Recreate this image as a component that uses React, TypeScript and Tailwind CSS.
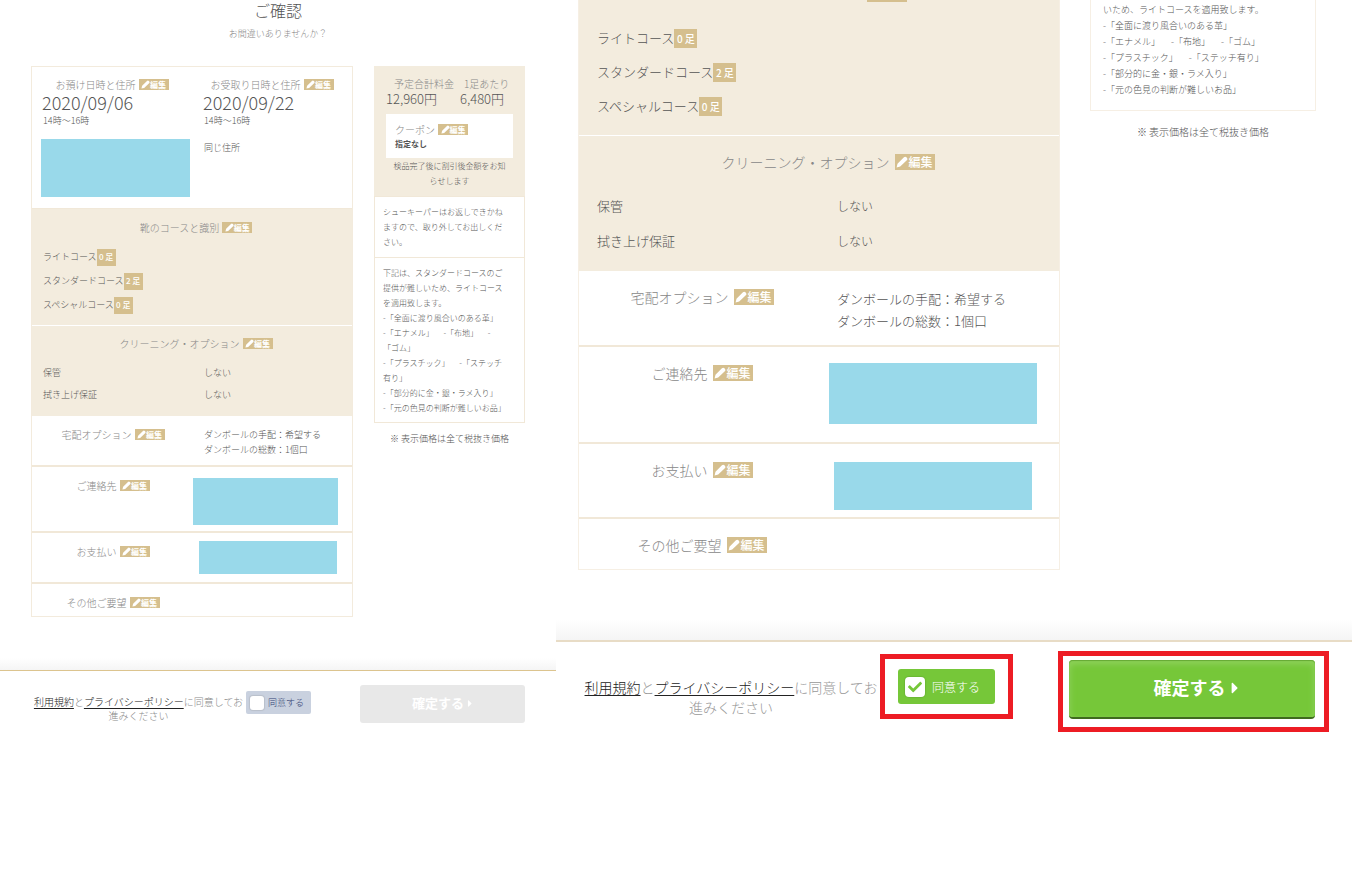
import { useState } from 'react';
import type { ReactNode } from 'react';
import { clsx } from 'clsx';
import { FaCaretRight, FaCheck } from 'react-icons/fa';

type Size = 'sm' | 'lg';

const courses = [
  { name: 'ライトコース', count: 0 },
  { name: 'スタンダードコース', count: 2 },
  { name: 'スペシャルコース', count: 0 },
];

const options = [
  { name: '保管', value: 'しない' },
  { name: '拭き上げ保証', value: 'しない' },
];

function PencilIcon({ className }: { className: string }) {
  return (
    <svg viewBox="0 0 16 16" fill="currentColor" className={className} aria-hidden="true">
      <path d="M0.8 15.2 2 10.4 10.6 1.8a2.4 2.4 0 0 1 3.4 0l.4.4a2.4 2.4 0 0 1 0 3.4L5.6 14z" />
    </svg>
  );
}

function EditButton({ size }: { size: Size }) {
  return (
    <button
      type="button"
      className={clsx(
        'flex shrink-0 items-center justify-center bg-[#d5bf8e] text-white',
        size === 'sm' ? 'h-[11px] w-[30px] text-[8px] leading-[11px] font-bold' : 'h-4 w-10 text-[12px] leading-4 font-medium'
      )}
    >
      <PencilIcon className={size === 'sm' ? 'h-[9px] w-[9px]' : 'h-3 w-3'} />
      編集
    </button>
  );
}

function Heading({ size, children }: { size: Size; children: ReactNode }) {
  return (
    <div
      className={clsx(
        'flex items-center justify-center whitespace-nowrap text-[#888]',
        size === 'sm' ? 'h-4 gap-[3px] text-[10px]' : 'h-5 gap-[5px] text-[14px]'
      )}
    >
      <h2>{children}</h2>
      <EditButton size={size} />
    </div>
  );
}

function CourseList({ size }: { size: Size }) {
  const sm = size === 'sm';
  return (
    <ul className={sm ? 'px-[11px] text-[9px]' : 'px-[18px] text-[13px]'}>
      {courses.map((course) => (
        <li key={course.name} className={clsx('flex items-center', sm ? 'h-6' : 'h-[34px]')}>
          {course.name}
          <span
            className={clsx(
              'flex items-center justify-center bg-[#d5bf8e] font-medium text-white',
              sm ? 'h-[17px] w-[19px] text-[8px]' : 'h-[19px] w-[23px] text-[10px]'
            )}
          >
            {course.count} 足
          </span>
        </li>
      ))}
    </ul>
  );
}

function OptionList({ size }: { size: Size }) {
  const sm = size === 'sm';
  return (
    <dl className={sm ? 'text-[9px]' : 'text-[13px]'}>
      {options.map((option) => (
        <div key={option.name} className={clsx('grid grid-cols-2 items-center', sm ? 'h-[22px]' : 'h-[35px]')}>
          <dt className={sm ? 'px-[11px]' : 'px-[18px]'}>{option.name}</dt>
          <dd className={sm ? 'px-3' : 'px-[18px] text-[12px]'}>{option.value}</dd>
        </div>
      ))}
    </dl>
  );
}

function Row({ size, title, last, children }: { size: Size; title: string; last?: boolean; children?: ReactNode }) {
  return (
    <section className={clsx('grid grid-cols-2', !last && 'border-b-2 border-[#f1e8d8]')}>
      <div className={size === 'sm' ? 'pt-[10px] pb-[6px] pl-[2px]' : 'pt-4 pb-[14px] pl-[6px]'}>
        <Heading size={size}>{title}</Heading>
      </div>
      {children}
    </section>
  );
}

function Notice({ size, wide }: { size: Size; wide?: boolean }) {
  return (
    <div
      className={clsx(
        'whitespace-nowrap [text-spacing-trim:space-all]',
        size === 'sm' ? 'text-[8px] leading-[15px]' : 'text-[9px] leading-4'
      )}
    >
      {wide ? (
        <>
          <p>いため、ライトコースを適用致します。</p>
          <p>-「全面に渡り風合いのある革」</p>
          <p>-「エナメル」　 -「布地」　 -「ゴム」</p>
          <p>-「プラスチック」　 -「ステッチ有り」</p>
        </>
      ) : (
        <>
          <p>
            下記は、スタンダードコースのご
            <br />
            提供が難しいため、ライトコース
            <br />
            を適用致します。
          </p>
          <p>-「全面に渡り風合いのある革」</p>
          <p>
            -「エナメル」　 -「布地」　 -<br />
            「ゴム」
          </p>
          <p>
            -「プラスチック」　 -「ステッチ
            <br />
            有り」
          </p>
        </>
      )}
      <p>-「部分的に金・銀・ラメ入り」</p>
      <p>-「元の色見の判断が難しいお品」</p>
    </div>
  );
}

function Terms() {
  return (
    <>
      <a href="#terms" className="text-[#222] underline underline-offset-2">利用規約</a>と
      <a href="#privacy" className="text-[#222] underline underline-offset-2">プライバシーポリシー</a>
      に同意してお
      <br />
      進みください
    </>
  );
}

function BeforeAgree() {
  const [agreed, setAgreed] = useState(false);

  return (
    <div className="min-w-0">
      <header className="text-center">
        <h1 className="text-[16px] leading-5 font-light text-[#555]">ご確認</h1>
        <p className="pt-[6px] text-[9px] leading-4 text-[#888]">お間違いありませんか？</p>
      </header>

      <div className="mt-6 grid grid-cols-[322fr_151fr] items-start gap-[21px] px-[31px]">
        <main className="min-w-0 border border-[#f3ebdd]">
          <section className="grid grid-cols-2 border-b border-[#f1e8d8] pb-[11px]">
            <div className="pt-[9px]">
              <Heading size="sm">お預け日時と住所</Heading>
              <p className="pl-[10px] text-[18px] leading-5 font-light">2020/09/06</p>
              <p className="pl-[11px] text-[9px] leading-[18px]">14時〜16時</p>
              <div className="mt-[9px] mr-[2px] ml-[9px] h-[58px] bg-[#99d9ea]" />
            </div>
            <div className="pt-[9px]">
              <Heading size="sm">お受取り日時と住所</Heading>
              <p className="pl-[11px] text-[18px] leading-5 font-light">2020/09/22</p>
              <p className="pl-3 text-[9px] leading-[18px]">14時〜16時</p>
              <p className="pt-[9px] pl-3 text-[9px] leading-[18px]">同じ住所</p>
            </div>
          </section>

          <section className="border-b border-white bg-[#f3ecde] pt-[10px] pb-2">
            <div className="pb-[10px] pl-2">
              <Heading size="sm">靴のコースと識別</Heading>
            </div>
            <CourseList size="sm" />
          </section>

          <section className="bg-[#f3ecde] pt-[9px] pb-[10px]">
            <div className="pb-[11px] pl-2">
              <Heading size="sm">クリーニング・オプション</Heading>
            </div>
            <OptionList size="sm" />
          </section>

          <Row size="sm" title="宅配オプション">
            <p className="pt-[11px] pb-2 pl-3 text-[9px] leading-[15px] whitespace-nowrap">
              ダンボールの手配：希望する
              <br />
              ダンボールの総数：1個口
            </p>
          </Row>
          <Row size="sm" title="ご連絡先">
            <div className="mt-[11px] mr-[14px] mb-[6px] ml-px h-[47px] bg-[#99d9ea]" />
          </Row>
          <Row size="sm" title="お支払い">
            <div className="mt-2 mr-[15px] mb-2 ml-[7px] h-[33px] bg-[#99d9ea]" />
          </Row>
          <Row size="sm" title="その他ご要望" last />
        </main>

        <aside className="min-w-0">
          <div className="bg-[#f3ecde] px-3 pt-[10px] pb-2">
            <div className="grid grid-cols-[74fr_53fr] whitespace-nowrap">
              <div>
                <p className="pl-2 text-[10px] leading-4 text-[#888]">予定合計料金</p>
                <p className="text-[13px] leading-[14px] font-light">12,960円</p>
              </div>
              <div>
                <p className="pl-1 text-[10px] leading-4 text-[#888]">1足あたり</p>
                <p className="text-[13px] leading-[14px] font-light">6,480円</p>
              </div>
            </div>
            <div className="mt-2 bg-white px-[9px] pt-[7px] pb-2">
              <div className="flex">
                <Heading size="sm">クーポン</Heading>
              </div>
              <p className="text-[8px] leading-[13px] font-bold">指定なし</p>
            </div>
            <p className="text-center text-[8px] leading-[15px] whitespace-nowrap">
              検品完了後に割引後金額をお知
              <br />
              らせします
            </p>
          </div>
          <div className="border border-[#f1e8d8] px-2 pt-[7px] pb-2 text-[8px] leading-[15px] whitespace-nowrap [text-spacing-trim:space-all]">
            シューキーパーはお返しできかね
            <br />
            ますので、取り外してお出しくだ
            <br />
            さい。
          </div>
          <div className="border border-t-0 border-[#f1e8d8] px-2 pt-[7px] pb-[7px]">
            <Notice size="sm" />
          </div>
          <p className="pt-2 text-center text-[9px] leading-[15px] whitespace-nowrap">※ 表示価格は全て税抜き価格</p>
        </aside>
      </div>

      <footer className="mt-[41px]">
        <div className="h-3 bg-linear-to-b from-white to-[#f5f5f5]" />
        <div className="flex items-start border-t border-[#dcc48f] px-[31px]">
          <p className="mt-6 flex-1 text-center text-[10px] leading-[14px] whitespace-nowrap text-[#888]">
            <Terms />
          </p>
          <label className="mt-5 flex h-[23px] w-[65px] items-center gap-1 rounded-xs bg-[#c9d1df] pl-1 text-[9px] whitespace-nowrap text-[#334173]">
            <input
              type="checkbox"
              checked={agreed}
              onChange={(e) => setAgreed(e.target.checked)}
              className="h-[14px] w-[14px] appearance-none rounded-[3px] bg-white shadow-[0_0_1px_1px_#b9bfca] checked:bg-[#76c739]"
            />
            同意する
          </label>
          <button
            type="button"
            disabled={!agreed}
            className="mt-[14px] ml-[49px] flex h-[38px] w-[165px] items-center justify-center gap-[3px] rounded-[3px] bg-[#76c739] pb-[2px] text-[13px] font-bold text-white disabled:bg-[#e8e8e8]"
          >
            確定する
            <FaCaretRight className="h-[11px] w-[6px]" />
          </button>
        </div>
      </footer>
    </div>
  );
}

function AfterAgree() {
  const [agreed, setAgreed] = useState(true);

  return (
    <div className="min-w-0">
      <div className="grid grid-cols-[482fr_226fr] items-start gap-[30px] pr-9 pl-[22px]">
        <main className="min-w-0 border border-t-0 border-[#f6efe4]">
          <section className="border-b border-white bg-[#f3ecde] pb-3">
            <div className="flex justify-center pb-[19px] pl-[136px]">
              <button type="button" aria-label="編集" className="h-[2px] w-10 bg-[#d5bf8e]" />
            </div>
            <CourseList size="lg" />
          </section>

          <section className="bg-[#f3ecde] pt-4 pb-[13px]">
            <div className="pb-4 pl-[18px]">
              <Heading size="lg">クリーニング・オプション</Heading>
            </div>
            <OptionList size="lg" />
          </section>

          <Row size="lg" title="宅配オプション">
            <p className="pt-[17px] pb-[13px] pl-[18px] text-[13px] leading-[22px] whitespace-nowrap">
              ダンボールの手配：希望する
              <br />
              ダンボールの総数：1個口
            </p>
          </Row>
          <Row size="lg" title="ご連絡先">
            <div className="mt-4 mr-[22px] mb-[18px] ml-[10px] h-[61px] bg-[#99d9ea]" />
          </Row>
          <Row size="lg" title="お支払い">
            <div className="mt-[18px] mr-[27px] mb-[7px] ml-[15px] h-12 bg-[#99d9ea]" />
          </Row>
          <Row size="lg" title="その他ご要望" last />
        </main>

        <aside className="min-w-0">
          <div className="border border-t-0 border-[#f6efe4] px-3 pt-[2px] pb-3">
            <Notice size="lg" wide />
          </div>
          <p className="pt-[13px] text-center text-[10px] leading-4 whitespace-nowrap">※ 表示価格は全て税抜き価格</p>
        </aside>
      </div>

      <footer className="mt-[50px]">
        <div className="h-5 bg-linear-to-b from-white to-[#f5f5f5]" />
        <div className="flex items-start border-t-2 border-[#e8dcc6] pr-[37px] pl-[26px]">
          <p className="mt-[35px] flex-1 text-center text-[14px] leading-5 whitespace-nowrap text-[#999]">
            <Terms />
          </p>
          <div className="relative mt-[27px] ml-[18px]">
            <label className="flex h-[35px] w-[97px] items-center gap-[7px] rounded-[3px] bg-[#76c739] pl-[7px] text-[12px] whitespace-nowrap text-white">
              <span className="relative flex">
                <input
                  type="checkbox"
                  checked={agreed}
                  onChange={(e) => setAgreed(e.target.checked)}
                  className="h-5 w-5 appearance-none rounded-[4px] bg-white shadow-[0_0_1px_1px_#6cb735]"
                />
                {agreed && (
                  <FaCheck className="pointer-events-none absolute top-[3px] left-[3px] h-[14px] w-[14px] text-[#76c739]" />
                )}
              </span>
              同意する
            </label>
            <div className="pointer-events-none absolute -inset-x-[18px] -inset-y-[15px] border-[5px] border-[#ed1c24]" />
          </div>
          <div className="relative mt-[18px] ml-[74px]">
            <button
              type="button"
              disabled={!agreed}
              className="flex h-[59px] w-[246px] items-center justify-center gap-[5px] rounded-[4px] border-b-2 border-[#3f6b1e] bg-[#76c739] pb-[2px] pl-2 text-[18px] font-bold text-white shadow-[inset_0_1px_1px_#64a834,inset_0_3px_6px_1px_#8fd25c] disabled:bg-[#e8e8e8]"
            >
              確定する
              <FaCaretRight className="h-[18px] w-[8px]" />
            </button>
            <div className="pointer-events-none absolute -top-[9px] -right-[14px] -bottom-[13px] -left-[11px] border-[5px] border-[#ed1c24]" />
          </div>
        </div>
      </footer>
    </div>
  );
}

export default function App() {
  return (
    <div className="grid min-h-screen grid-cols-[556fr_796fr] items-start bg-white font-['Noto_Sans_CJK_JP',sans-serif] font-light text-[#555]">
      <BeforeAgree />
      <AfterAgree />
    </div>
  );
}
